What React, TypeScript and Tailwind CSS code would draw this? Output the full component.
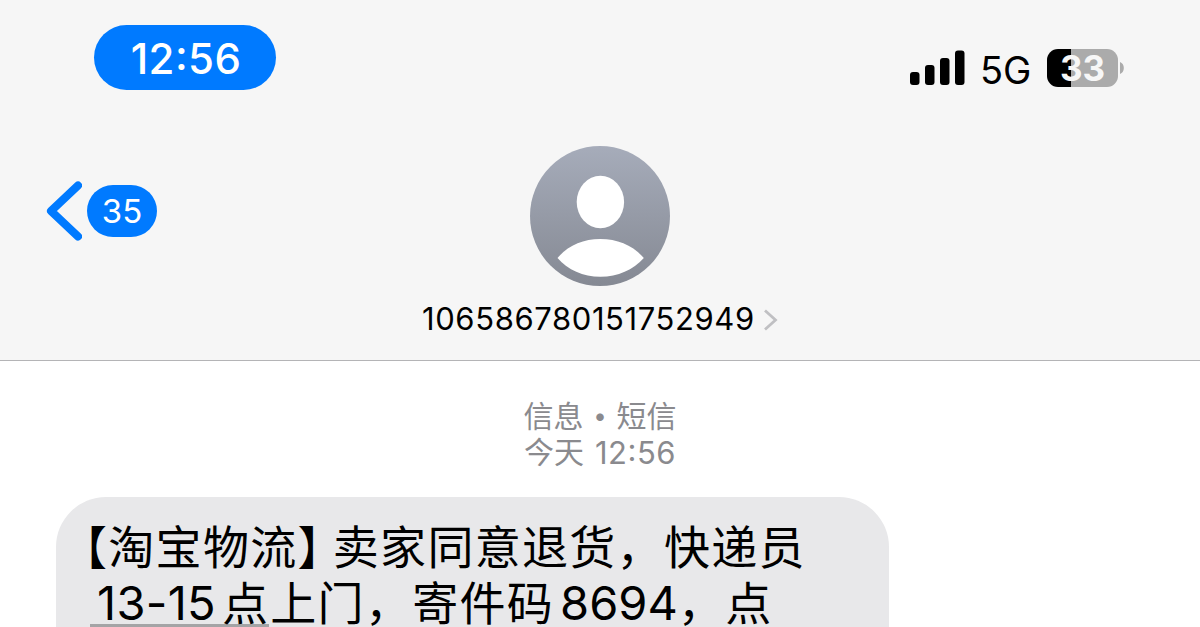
const FONT = "font-['Inter','Noto_Sans_CJK_SC',sans-serif]";

function Signal() {
  return (
    <svg width="56" height="36" viewBox="0 0 56 36" className="block">
      <rect x="0" y="22" width="9.500" height="13" rx="3" />
      <rect x="15" y="15" width="9.500" height="20" rx="3" />
      <rect x="30" y="8" width="9.500" height="27" rx="3" />
      <rect x="45" y="0.500" width="9.500" height="34.500" rx="3" />
    </svg>
  );
}

function Battery() {
  return (
    <div className="flex items-center">
      <div className="flex h-[38px] w-[71px] items-center justify-center rounded-[11px] bg-linear-to-r from-black from-[24px] to-[#ababab] to-[24px]">
        <span className="text-[35px] leading-[38px] font-bold text-[#f7f7f7]">33</span>
      </div>
      <svg width="5" height="14" viewBox="0 0 5 14" className="ml-[2px] block">
        <path d="M0 1C2.500 2 3.800 4.300 3.800 7S2.500 12 0 13Z" fill="#ababab" />
      </svg>
    </div>
  );
}

function Avatar() {
  return (
    <svg width="140" height="140" viewBox="0 0 140 140" className="block">
      <defs>
        <linearGradient id="avatar" x1="0" y1="0" x2="0" y2="1">
          <stop offset="0" stopColor="#a6acba" />
          <stop offset="1" stopColor="#858993" />
        </linearGradient>
      </defs>
      <circle cx="70" cy="70" r="70" fill="url(#avatar)" />
      <ellipse cx="70.400" cy="56" rx="23.700" ry="26.200" fill="#fff" />
      <path d="M27.500 112C38 99.500 53 93 70.400 93S103 99.500 113.800 112C103 124 88 130.700 70.400 130.700S38 124 27.500 112Z" fill="#fff" />
    </svg>
  );
}

export default function App() {
  return (
    <div className={`flex h-[627px] w-[1200px] flex-col overflow-hidden bg-white text-black ${FONT}`}>
      <header className="flex h-[361px] shrink-0 flex-col border-b border-[#b4b4b6] bg-[#f6f6f6]">
        <div className="flex h-[146px] items-start justify-between pl-[94px] pr-[75px]">
          <div className="mt-[25px] flex h-[65px] w-[182px] items-center justify-center rounded-full bg-[#007aff] pt-[3px] pl-[2px] text-[42px] leading-[62px] font-[450] tracking-[0.4px] text-white [font-feature-settings:'case']">
            12:56
          </div>
          <div className="mt-[49px] flex h-[38px] items-center">
            <Signal />
            <span className="ml-[14px] w-[67px] pt-[3px] text-[38px] leading-[38px]">5G</span>
            <Battery />
          </div>
        </div>
        <div className="grid grid-cols-[1fr_140px_1fr]">
          <div className="flex items-center pl-[46px] pb-[10px]">
            <svg width="36" height="60" viewBox="0 0 36 60" className="block">
              <path d="M32 4.500L5 30L32 55.500" fill="none" stroke="#007aff" strokeWidth="8" strokeLinecap="round" strokeLinejoin="round" />
            </svg>
            <span className="ml-[5px] flex h-[52px] w-[70px] items-center justify-center rounded-full bg-[#007aff] text-[33px] leading-[52px] text-white">
              35
            </span>
          </div>
          <Avatar />
        </div>
        <div className="mt-[13px] flex h-[40px] items-center pl-[422px]">
          <span className="w-[341px] text-[31px] leading-[40px] tracking-[0.6px]">106586780151752949</span>
          <svg width="15" height="24" viewBox="0 0 15 24" className="mt-[2px] block">
            <path d="M2 2.500L12.500 12L2 21.500" fill="none" stroke="#c0c0c3" strokeWidth="2.800" />
          </svg>
        </div>
      </header>
      <main className="flex flex-1 flex-col">
        <div className="flex h-[136px] flex-col items-center pt-[37px] text-[30px] leading-[36px] text-[#8a8a8e]">
          <p className="flex">
            <span>信息</span>
            <span className="w-[33px] text-center text-[24px]">•</span>
            <span>短信</span>
          </p>
          <p className="flex">
            <span>今天</span>
            <span className="ml-[11px] pt-[1px] text-[31px] tracking-[0.5px] [font-feature-settings:'case']">12:56</span>
          </p>
        </div>
        <div className="ml-[56px] h-[130px] w-[833px] shrink-0 rounded-t-[50px] bg-[#e8e8ea] pt-[22px] text-[46px] leading-[56px] tracking-[1.300px]">
          <p className="flex pl-[5px]">
            <span>【淘宝物流】</span>
            <span className="-ml-[12px]">卖家同意退货，快递员</span>
          </p>
          <p className="flex pl-[34px]">
            <span className="flex h-[52px] border-b-[3px] border-[#a4a4a6]">
              <span className="pl-[7px] text-[47px] tracking-[0.3px]">13-15</span>
              <span className="ml-[6px]">点</span>
            </span>
            <span className="ml-[1px]">上门，寄件码</span>
            <span className="ml-[6px] text-[47px] tracking-normal">8694</span>
            <span>，点</span>
          </p>
        </div>
      </main>
    </div>
  );
}
